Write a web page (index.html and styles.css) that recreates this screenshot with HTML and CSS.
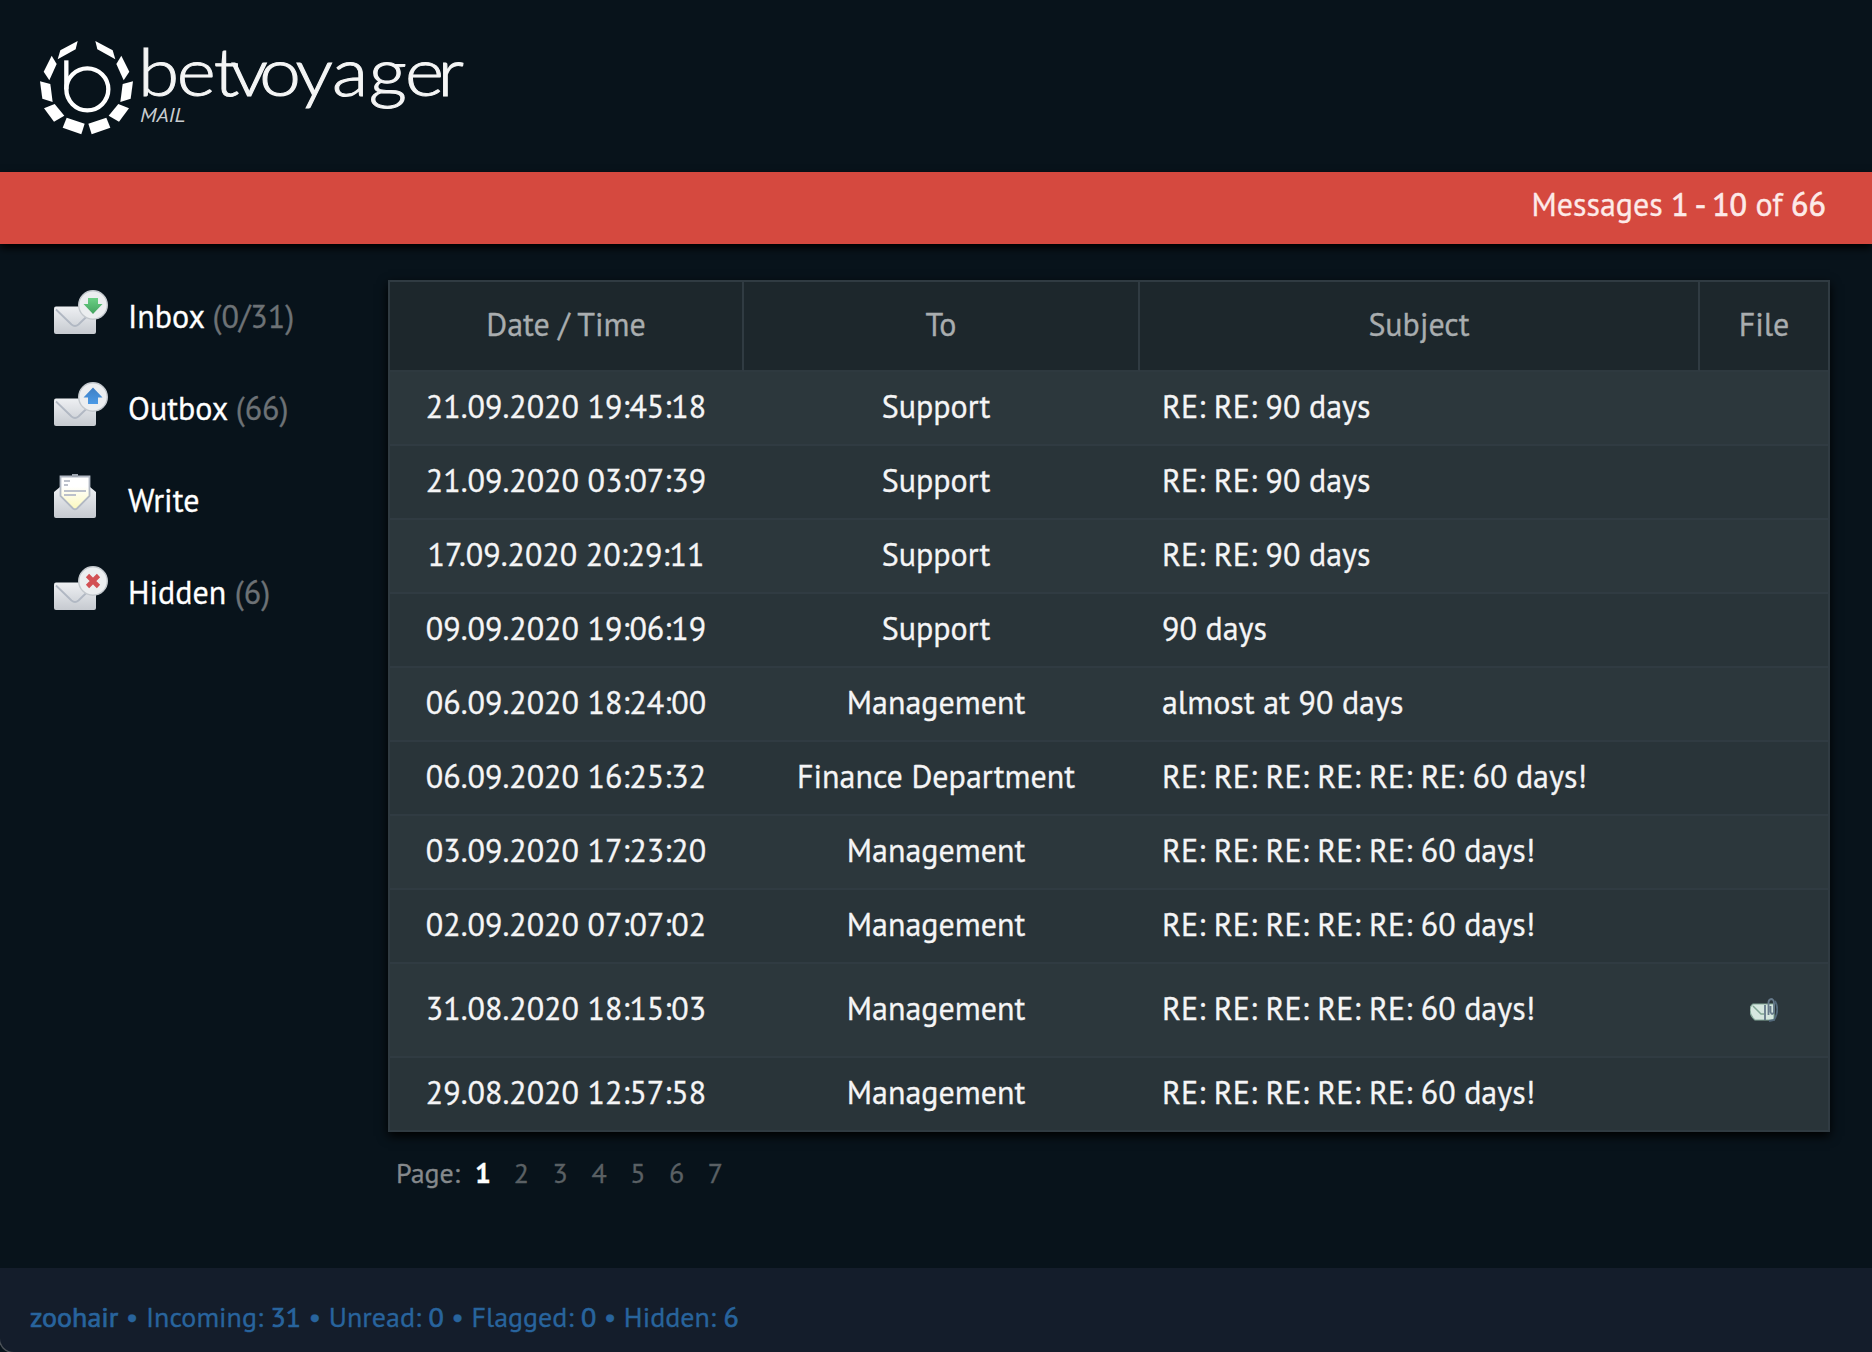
FILE: index.html
```html
<!DOCTYPE html>
<html lang="en">
<head>
    <meta charset="UTF-8">
    <meta name="viewport" content="width=device-width, initial-scale=1.0">
    <title>BetVoyager Mail</title>
    <link rel="stylesheet" href="styles.css">
</head>
<body>

<!-- Shared icon parts -->
<svg class="defs" width="0" height="0">
    <defs>
        <linearGradient id="paper" x1="0" y1="0" x2="0" y2="1">
            <stop offset="0" stop-color="#eef0f3"/>
            <stop offset="1" stop-color="#c6cad0"/>
        </linearGradient>
        <linearGradient id="note" x1="0" y1="0" x2="0" y2="1">
            <stop offset="0.3" stop-color="#ffffff"/>
            <stop offset="1" stop-color="#fbf8bd"/>
        </linearGradient>
        <linearGradient id="green" x1="0" y1="0" x2="0" y2="1">
            <stop offset="0" stop-color="#6bd084"/>
            <stop offset="1" stop-color="#43a35f"/>
        </linearGradient>
        <linearGradient id="blue" x1="0" y1="0" x2="0" y2="1">
            <stop offset="0" stop-color="#3f7fc4"/>
            <stop offset="1" stop-color="#4b9ae6"/>
        </linearGradient>
        <g id="envelope">
            <rect x="0" y="16.500" width="42" height="27.500" rx="2" fill="url(#paper)"/>
            <path d="M2 19.500 L17.500 34.500 Q21 37.500 24.500 34.500 L40 19.500" fill="none" stroke="#b1b8c3" stroke-width="1.800"/>
            <circle cx="39" cy="15" r="14.300" fill="#eceef0" stroke="#c3c8cd" stroke-width="1.400"/>
        </g>
    </defs>
</svg>

<header class="header">
    <svg class="logo" viewBox="0 0 1380 390">
        <g fill="#fff">
            <g id="tiles">
                <polygon points="173,63 167,88 113,118 121,91"/>
                <polygon points="95,107 110,132 88,181 71,155"/>
                <polygon points="60,184 91,192 98,246 67,236"/>
                <polygon points="72,265 104,252 133,287 102,305"/>
                <polygon points="140,293 194,311 184,343 128,323"/>
            </g>
            <use href="#tiles" transform="translate(399 0) scale(-1 1)"/>
        </g>
        <circle cx="202" cy="208" r="63" fill="none" stroke="#fff" stroke-width="13"/>
        <line x1="139" y1="121" x2="139" y2="208" stroke="#fff" stroke-width="13"/>
        <text class="logo-name" transform="scale(1.12 1)" x="316 420 519 564 641 738 836 934 1031 1118" y="229">betvoyager</text>
        <text class="logo-mail" x="360" y="307" textLength="136" lengthAdjust="spacingAndGlyphs">MAIL</text>
    </svg>
</header>

<div class="bar">Messages <b>1 - 10</b> of <b>66</b></div>

<main class="main">
    <nav class="menu">
        <a class="menu-item">
            <svg class="menu-icon" viewBox="0 0 54 44">
                <use href="#envelope"/>
                <path d="M34 8 H44 V14 H48.500 L39 24 L29.500 14 H34 Z" fill="url(#green)"/>
            </svg>
            <span>Inbox <i>(0/31)</i></span>
        </a>
        <a class="menu-item">
            <svg class="menu-icon" viewBox="0 0 54 44">
                <use href="#envelope"/>
                <path d="M39 5.500 L48.500 15.500 H44 V22 H34 V15.500 H29.500 Z" fill="url(#blue)"/>
            </svg>
            <span>Outbox <i>(66)</i></span>
        </a>
        <a class="menu-item">
            <svg class="menu-icon" viewBox="0 0 54 44">
                <path d="M0 18 L6 13 H36 L42 18 V42 Q42 44 40 44 H2 Q0 44 0 42 Z" fill="url(#paper)"/>
                <path d="M6.500 2.500 H35.500 V22 L23 34.500 Q21 36 19 34.500 L6.500 22 Z" fill="url(#note)" stroke="#b1b8c3" stroke-width="1.800"/>
                <path d="M10 7 H16 M10 11 H14 M10 17 H32 M10 21 H22" stroke="#bcc1cb" stroke-width="1.800"/>
                <rect x="18" y="0" width="6" height="3" fill="#9ea6b1"/>
            </svg>
            <span>Write</span>
        </a>
        <a class="menu-item">
            <svg class="menu-icon" viewBox="0 0 54 44">
                <use href="#envelope"/>
                <path d="M33.500 9.500 L44.500 20.500 M44.500 9.500 L33.500 20.500" stroke="#d25054" stroke-width="4.600"/>
            </svg>
            <span>Hidden <i>(6)</i></span>
        </a>
    </nav>

    <section class="content">
        <table class="messages">
            <thead>
                <tr>
                    <th class="col-date">Date / Time</th>
                    <th class="col-to">To</th>
                    <th class="col-subject">Subject</th>
                    <th class="col-file">File</th>
                </tr>
            </thead>
            <tbody>
                <tr>
                    <td class="date">21.09.2020 19:45:18</td>
                    <td class="to">Support</td>
                    <td class="subject">RE: RE: 90 days</td>
                    <td></td>
                </tr>
                <tr>
                    <td class="date">21.09.2020 03:07:39</td>
                    <td class="to">Support</td>
                    <td class="subject">RE: RE: 90 days</td>
                    <td></td>
                </tr>
                <tr>
                    <td class="date">17.09.2020 20:29:11</td>
                    <td class="to">Support</td>
                    <td class="subject">RE: RE: 90 days</td>
                    <td></td>
                </tr>
                <tr>
                    <td class="date">09.09.2020 19:06:19</td>
                    <td class="to">Support</td>
                    <td class="subject">90 days</td>
                    <td></td>
                </tr>
                <tr>
                    <td class="date">06.09.2020 18:24:00</td>
                    <td class="to">Management</td>
                    <td class="subject">almost at 90 days</td>
                    <td></td>
                </tr>
                <tr>
                    <td class="date">06.09.2020 16:25:32</td>
                    <td class="to">Finance Department</td>
                    <td class="subject">RE: RE: RE: RE: RE: RE: 60 days!</td>
                    <td></td>
                </tr>
                <tr>
                    <td class="date">03.09.2020 17:23:20</td>
                    <td class="to">Management</td>
                    <td class="subject">RE: RE: RE: RE: RE: 60 days!</td>
                    <td></td>
                </tr>
                <tr>
                    <td class="date">02.09.2020 07:07:02</td>
                    <td class="to">Management</td>
                    <td class="subject">RE: RE: RE: RE: RE: 60 days!</td>
                    <td></td>
                </tr>
                <tr class="has-file">
                    <td class="date">31.08.2020 18:15:03</td>
                    <td class="to">Management</td>
                    <td class="subject">RE: RE: RE: RE: RE: 60 days!</td>
                    <td class="file">
                        <svg class="file-icon" viewBox="0 0 28 24">
                            <path d="M3 6 H24 V22 H5 Q0 18 0 12 Q0 8 3 6 Z" fill="#d5e7df" stroke="#86a99a" stroke-width="1.200"/>
                            <path d="M3 8 L11 16 H14" fill="none" stroke="#7fa493" stroke-width="1.500"/>
                            <path d="M15 7 V22 M18.500 17 V4 Q19 1 22 1 Q24 2 24 5 V14 Q22 18 20.500 14 V8" fill="none" stroke="#65798a" stroke-width="1.800"/>
                            <path d="M25 3 Q30 12 24 22 L19 23" fill="none" stroke="#52687a" stroke-width="1.800"/>
                        </svg>
                    </td>
                </tr>
                <tr>
                    <td class="date">29.08.2020 12:57:58</td>
                    <td class="to">Management</td>
                    <td class="subject">RE: RE: RE: RE: RE: 60 days!</td>
                    <td></td>
                </tr>
            </tbody>
        </table>

        <div class="pages">
            <span class="pages-label">Page:</span>
            <a class="current">1</a>
            <a>2</a>
            <a>3</a>
            <a>4</a>
            <a>5</a>
            <a>6</a>
            <a>7</a>
        </div>
    </section>
</main>

<footer class="footer"><b>zoohair</b> • Incoming: <b>31</b> • Unread: <b>0</b> • Flagged: <b>0</b> • Hidden: <b>6</b></footer>

</body>
</html>
```
FILE: styles.css
```css
* {
    box-sizing: border-box;
}
body {
    margin: 0;
    height: 1352px;
    display: flex;
    flex-direction: column;
    overflow: hidden;
    background: #08131b;
    color: #fff;
    font-family: "PT Sans", "Noto Sans", sans-serif;
    font-size: 32px;
    line-height: 40px;
    -webkit-text-stroke: 0.3px;
}
b {
    font-weight: 400;
    -webkit-text-stroke: 0.7px;
}
.defs {
    position: absolute;
}
.header {
    height: 172px;
    padding: 20px;
}
.logo {
    display: block;
    width: 460px;
    height: 130px;
}
.logo-name {
    font-family: Lato, sans-serif;
    font-size: 200px;
    font-weight: 300;
    fill: #f4f5f5;
    stroke: #f4f5f5;
    stroke-width: 3px;
}
.logo-mail {
    font-size: 60px;
    font-style: italic;
    fill: #c9cdd0;
}
.bar {
    height: 72px;
    padding: 12px 46px 0;
    background: #d5493f;
    color: #fdeae8;
    text-align: right;
    box-shadow: 0 4px 8px #000;
}
.main {
    flex: 1;
    display: flex;
    padding: 36px 42px 0 54px;
}
.menu {
    width: 334px;
    padding-top: 10px;
}
.menu-item {
    display: flex;
    height: 92px;
    gap: 20px;
}
.menu-item span {
    padding-top: 6px;
}
.menu-item i {
    font-style: normal;
    color: #6d7276;
}
.menu-icon {
    width: 54px;
    height: 44px;
}
.content {
    flex: 1;
}
.messages {
    width: 1442px;
    table-layout: fixed;
    border-collapse: separate;
    border-spacing: 0;
    border: 2px solid #303b42;
    box-shadow: 0 4px 10px #000;
}
.messages th {
    height: 90px;
    padding: 0 0 4px;
    background: #1d272c;
    border-right: 2px solid #303b42;
    border-bottom: 2px solid #2e393f;
    color: #a9adaf;
    font-weight: 400;
}
.messages th:last-child {
    border-right: 0;
}
.col-date {
    width: 354px;
}
.col-to {
    width: 396px;
}
.col-subject {
    width: 560px;
}
.messages td {
    height: 74px;
    padding: 0 0 4px;
    background: #2c373c;
    border-bottom: 2px solid #303b42;
    color: #f5f5f6;
    white-space: nowrap;
}
.messages tr:nth-child(even) td {
    background: #293439;
}
.messages .has-file td {
    height: 94px;
}
.messages tbody tr:last-child td {
    height: 72px;
    border-bottom: 0;
}
.messages .date {
    text-align: center;
    padding-right: 2px;
}
.messages .to {
    text-align: center;
    padding-right: 12px;
}
.messages .subject {
    padding-left: 22px;
}
.messages .file {
    text-align: center;
    padding-bottom: 8px;
}
.file-icon {
    display: inline-block;
    vertical-align: middle;
    width: 28px;
    height: 24px;
}
.pages {
    display: flex;
    padding: 21px 0 0 8px;
    font-size: 28px;
    color: #5a6064;
}
.pages-label {
    width: 67px;
    color: #85898c;
}
.pages a {
    width: 38.8px;
    padding-left: 12px;
}
.pages .current {
    color: #fff;
    font-weight: 700;
}
.footer {
    height: 84px;
    padding: 29px 30px 0;
    background: #141d2b;
    border-bottom-left-radius: 14px;
    box-shadow: -1px 1px 0 #4c5258;
    color: #28649d;
    font-size: 28px;
}
```
